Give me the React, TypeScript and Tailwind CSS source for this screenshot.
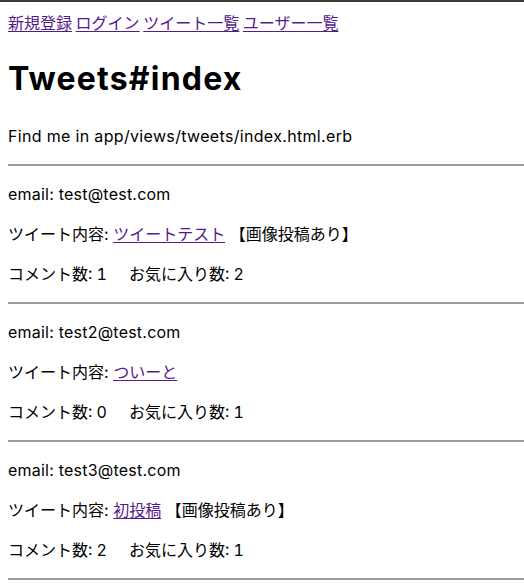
import React from "react";

interface Tweet {
  email: string;
  content: string;
  hasImage: boolean;
  comments: number;
  favorites: number;
}

const tweets: Tweet[] = [
  { email: "test@test.com", content: "ツイートテスト", hasImage: true, comments: 1, favorites: 2 },
  { email: "test2@test.com", content: "ついーと", hasImage: false, comments: 0, favorites: 1 },
  { email: "test3@test.com", content: "初投稿", hasImage: true, comments: 2, favorites: 1 },
];

const link = "text-[#551a8b] underline underline-offset-2";

function Rule() {
  return <hr className="my-4 mr-[-8px] h-0 border-0 border-t-2 border-t-[#9a9a9a]" />;
}

export default function App() {
  return (
    <div className="min-h-[588px] border-t-2 border-[#3a3a3a] bg-white text-black font-['Inter','Noto_Sans_CJK_JP',sans-serif] text-[16px] leading-6 overflow-hidden">
      <div className="mx-2 mt-2">
        <nav className="h-6 font-['Noto_Sans_CJK_JP',sans-serif]">
          <a className={link} href="#">新規登録</a>{" "}
          <a className={link} href="#">ログイン</a>{" "}
          <a className={link} href="#">ツイート一覧</a>{" "}
          <a className={link} href="#">ユーザー一覧</a>
        </nav>
        <h1 className="mt-[21px] mb-[21px] h-12 text-[32px] leading-[48px] font-bold tracking-[1.2px]">Tweets#index</h1>
        <p className="h-6 tracking-[0.33px]">Find me in app/views/tweets/index.html.erb</p>
        <Rule />
        {tweets.map((t) => (
          <div key={t.email}>
            <p className="mb-4 h-6 tracking-[0.22px]">email: {t.email}</p>
            <p className="mb-4 h-6">
              ツイート内容: <a className={link} href="#">{t.content}</a>
              {t.hasImage ? " 【画像投稿あり】" : ""}
            </p>
            <p className="h-6 tabular-nums">
              コメント数: {t.comments}
              <span className="inline-block w-[22px]" />
              お気に入り数: {t.favorites}
            </p>
            <Rule />
          </div>
        ))}
      </div>
    </div>
  );
}
